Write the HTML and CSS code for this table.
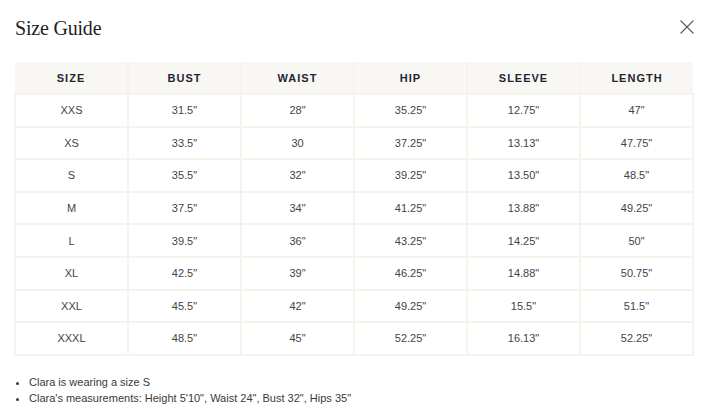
FILE: index.html
```html
<!DOCTYPE html>
<html>
<head>
<meta charset="utf-8">
<link rel="stylesheet" href="styles.css">
</head>
<body>
<div class="modal">
  <div class="modal-head">
    <h1 class="title">Size Guide</h1>
    <button class="close" aria-label="Close">
      <svg width="14" height="14" viewBox="0 0 14 14"><path d="M0.5 0.5 L13.5 13.5 M13.5 0.5 L0.5 13.5" stroke="#5a5a5a" stroke-width="1.1" fill="none"/></svg>
    </button>
  </div>
  <table class="sizes">
    <thead>
      <tr><th>SIZE</th><th>BUST</th><th>WAIST</th><th>HIP</th><th>SLEEVE</th><th>LENGTH</th></tr>
    </thead>
    <tbody>
      <tr><td>XXS</td><td>31.5"</td><td>28"</td><td>35.25"</td><td>12.75"</td><td>47"</td></tr>
      <tr><td>XS</td><td>33.5"</td><td>30</td><td>37.25"</td><td>13.13"</td><td>47.75"</td></tr>
      <tr><td>S</td><td>35.5"</td><td>32"</td><td>39.25"</td><td>13.50"</td><td>48.5"</td></tr>
      <tr><td>M</td><td>37.5"</td><td>34"</td><td>41.25"</td><td>13.88"</td><td>49.25"</td></tr>
      <tr><td>L</td><td>39.5"</td><td>36"</td><td>43.25"</td><td>14.25"</td><td>50"</td></tr>
      <tr><td>XL</td><td>42.5"</td><td>39"</td><td>46.25"</td><td>14.88"</td><td>50.75"</td></tr>
      <tr><td>XXL</td><td>45.5"</td><td>42"</td><td>49.25"</td><td>15.5"</td><td>51.5"</td></tr>
      <tr><td>XXXL</td><td>48.5"</td><td>45"</td><td>52.25"</td><td>16.13"</td><td>52.25"</td></tr>
    </tbody>
  </table>
  <ul class="notes">
    <li>Clara is wearing a size S</li>
    <li>Clara's measurements: Height 5'10", Waist 24", Bust 32", Hips 35"</li>
  </ul>
</div>
</body>
</html>
```
FILE: styles.css
```css
html, body {
  margin: 0;
  padding: 0;
  background: #ffffff;
}
body {
  font-family: "Liberation Sans", Arial, sans-serif;
  color: #333333;
}
.modal {
  width: 708px;
  height: 419px;
  box-sizing: border-box;
  padding: 16px 14px 0 14px;
}
.modal-head {
  display: flex;
  justify-content: space-between;
  align-items: flex-start;
  height: 46px;
}
.title {
  margin: 0;
  font-family: "Liberation Serif", "Times New Roman", serif;
  font-weight: normal;
  font-size: 20px;
  line-height: 24px;
  color: #1f1f1f;
  padding-left: 1px;
  letter-spacing: -0.2px;
}
.close {
  background: none;
  border: 0;
  padding: 0;
  margin: 4px 0 0 0;
  width: 14px;
  height: 14px;
  display: block;
}
.close svg { display: block; }
.sizes {
  width: 680px;
  border-collapse: collapse;
  table-layout: fixed;
  font-size: 11px;
}
.sizes th, .sizes td {
  border: 2px solid #f6f3ec;
  text-align: center;
  padding: 0;
}
.sizes th {
  background: #f9f7f3;
  height: 31px;
  font-weight: bold;
  letter-spacing: 1px;
  color: #1e2633;
  border-top: 0;
}
.sizes thead tr th:first-child { border-left: 0; }
.sizes thead tr th:last-child { border-right: 0; }
.sizes td {
  height: 30.6px;
  color: #444444;
}
.notes {
  margin: 18px 0 0 0;
  padding: 0 0 0 15px;
  font-size: 11px;
  line-height: 16px;
  color: #3a3a3a;
}
.notes li { padding-left: 0; }
```
